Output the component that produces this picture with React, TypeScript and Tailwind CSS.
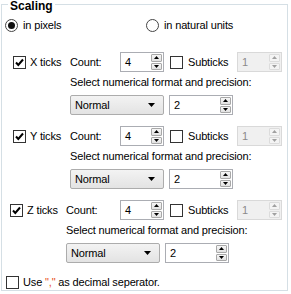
import React from 'react';

const Check = ({ checked = false }: { checked?: boolean }) => (
  <div className="w-[13px] h-[13px] shrink-0 border border-[#333] bg-white flex items-center justify-center">
    {checked && (
      <svg viewBox="0 0 11 11" className="w-[11px] h-[11px]">
        <path d="M2 5.5 L4.3 8 L9 2.5" fill="none" stroke="#000" strokeWidth="2" />
      </svg>
    )}
  </div>
);

const Radio = ({ on = false }: { on?: boolean }) => (
  <div className="w-[13px] h-[13px] shrink-0 rounded-full border border-[#444] bg-white flex items-center justify-center">
    {on && <div className="w-[7px] h-[7px] rounded-full bg-[#111]" />}
  </div>
);

const Arrow = ({ up, dim }: { up?: boolean; dim?: boolean }) => (
  <svg viewBox="0 0 5 3" className="w-[5px] h-[3px]">
    <path d={up ? 'M0 3 L2.5 0 L5 3 Z' : 'M0 0 L5 0 L2.5 3 Z'} fill={dim ? '#a0a0a0' : '#000'} />
  </svg>
);

const Spin = ({ value, w, disabled }: { value: string; w: string; disabled?: boolean }) => (
  <div className={`${w} h-[20px] shrink-0 flex border ${disabled ? 'border-[#d9d9d9] bg-[#f0f0f0] text-[#8a8a8a]' : 'border-[#abadb3] bg-white text-black'}`}>
    <div className="flex-1 flex items-center pl-[4px]">{value}</div>
    <div className="flex flex-col gap-[1px] py-[1px] pr-[1px]">
      {[true, false].map(up => (
        <div key={String(up)}
          className={`w-[11px] flex-1 flex items-center justify-center border rounded-[1px] ${disabled ? 'border-[#dcdcdc] bg-[#f4f4f4]' : 'border-[#a8a8a8] bg-gradient-to-b from-[#f6f6f6] to-[#e2e2e2]'}`}>
          <Arrow up={up} dim={disabled} />
        </div>
      ))}
    </div>
  </div>
);

const Combo = ({ value }: { value: string }) => (
  <div className="w-[94px] h-[20px] shrink-0 flex items-center justify-between pl-[4px] pr-[8px] border border-[#acacac] rounded-[2px] bg-gradient-to-b from-[#f3f3f3] to-[#e3e3e3]">
    <span>{value}</span>
    <svg viewBox="0 0 7 4" className="w-[7px] h-[4px]">
      <path d="M0 0 L7 0 L3.5 4 Z" fill="#000" />
    </svg>
  </div>
);

const Axis = ({ name, shift }: { name: string; shift?: boolean }) => (
  <div>
    <div className="h-[20px] flex items-center whitespace-nowrap">
      <div className={`flex items-center gap-[4px] ${shift ? 'w-[64px] pl-[8px]' : 'w-[68px] pl-[11px]'}`}>
        <Check checked />
        <span>{name} ticks</span>
      </div>
      <div className={shift ? 'w-[54px]' : 'w-[50px]'}>Count:</div>
      <Spin value="4" w="w-[44px]" />
      <div className="w-[73px] pl-[6px] flex items-center gap-[5px]">
        <Check />
        <span>Subticks</span>
      </div>
      <Spin value="1" w="w-[45px]" disabled />
    </div>
    <div className={shift ? 'pl-[64px]' : 'pl-[68px]'}>
      <div className="h-[14px] mt-[3px] leading-[14px] whitespace-nowrap">Select numerical format and precision:</div>
      <div className="flex gap-[5px] mt-[6px]">
        <Combo value="Normal" />
        <Spin value="2" w="w-[64px]" />
      </div>
    </div>
  </div>
);

export default function App() {
  return (
    <div className="w-[291px] h-[294px] bg-white text-black text-[11px] tracking-[-0.15px] leading-none overflow-hidden"
      style={{ fontFamily: '"Liberation Sans", Arial, sans-serif' }}>
      <div className="pt-[4px] pl-[1px]">
        <div className="relative w-[287px] h-[287px] border border-[#d5dfe5]">
          <span className="absolute left-[6px] -top-[5px] px-[2px] bg-white font-bold text-[12px] leading-[12px] tracking-normal">Scaling</span>

          {/* ── Mode ── */}
          <div className="h-[13px] mt-[14px] pl-[3px] flex items-center whitespace-nowrap">
            <div className="w-[141px] flex items-center gap-[5px]">
              <Radio on />
              <span>in pixels</span>
            </div>
            <div className="flex items-center gap-[5px]">
              <Radio />
              <span>in natural units</span>
            </div>
          </div>

          {/* ── Axes ── */}
          <div className="mt-[20px] flex flex-col gap-[11px]">
            <Axis name="X" />
            <Axis name="Y" />
            <Axis name="Z" shift />
          </div>

          <div className="mt-[13px] pl-[4px] flex items-center gap-[4px] whitespace-nowrap">
            <Check />
            <span>Use <span className="text-[#e8501a]">","</span> as decimal seperator.</span>
          </div>
        </div>
      </div>
    </div>
  );
}
